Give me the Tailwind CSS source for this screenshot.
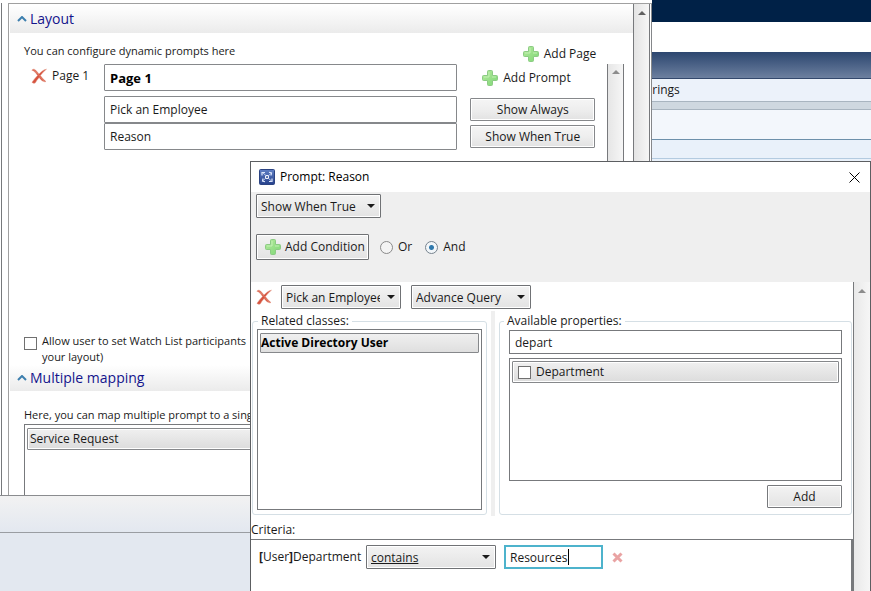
<!DOCTYPE html>
<html lang="en">
<head>
    <meta charset="UTF-8">
    <meta name="viewport" content="width=device-width, initial-scale=1.0">
    <script src="https://cdn.jsdelivr.net/npm/@tailwindcss/browser@4"></script>
    <title>Prompt: Reason</title>
    <style>
        body {
            font-family: 'Open Sans', 'Noto Sans', sans-serif;
        }
    </style>
</head>
<body class="relative flex h-screen overflow-hidden bg-white text-xs text-[#1a1a1a]">
    <!-- Shared icons -->
    <svg class="absolute size-0">
        <defs>
            <linearGradient id="green" x1="0" y1="0" x2="1" y2="1">
                <stop offset="0" stop-color="#b4ea9c"/>
                <stop offset="1" stop-color="#7fd777"/>
            </linearGradient>
            <linearGradient id="blue" x1="0" y1="0" x2="0" y2="1">
                <stop offset="0" stop-color="#5f7fc4"/>
                <stop offset="1" stop-color="#26418c"/>
            </linearGradient>
        </defs>
        <symbol id="plus" viewBox="0 0 16 16">
            <path d="M5.5 1.5a1 1 0 0 1 1-1h3a1 1 0 0 1 1 1v4h4a1 1 0 0 1 1 1v3a1 1 0 0 1-1 1h-4v4a1 1 0 0 1-1 1h-3a1 1 0 0 1-1-1v-4h-4a1 1 0 0 1-1-1v-3a1 1 0 0 1 1-1h4z" fill="url(#green)" stroke="#8ccb84"/>
            <path d="M7 2v5H2M10 7h4" fill="none" stroke="#d3f7c4" opacity=".7"/>
        </symbol>
        <symbol id="cross" viewBox="0 0 16 16">
            <path d="M.8 2.200C1.500.900 3.500.900 4.500 2 5.800 3.300 6.900 4.700 8 6 10 3.800 12.500 1.600 15.500 1.200 13 3.200 11 5.200 9.400 7.600 11 9.800 12.800 11.800 15 13.600c-2.800.8-5-1.400-6.900-4C6.500 11.600 5.200 13.200 4.200 15c-1.200.4-2.700.1-3.200-.8C2.700 11.700 4.600 9.600 6.500 7.500 5 5.200 3.500 3 .8 2.200z" fill="#d6523e" stroke="#e39a88" stroke-width=".5"/>
            <path d="M2.500 2C5.500 3.500 9.500 9.500 13 13" fill="none" stroke="#e58a72" stroke-width=".8"/>
        </symbol>
        <symbol id="arrow" viewBox="0 0 8 4">
            <path d="M0 0h8L4 4z" fill="currentColor"/>
        </symbol>
    </svg>

    <!-- Wizard window -->
    <div class="flex w-3/4 shrink-0 flex-col bg-white">
        <div class="flex h-[496px] border-b border-[#8a8c8f]">
            <div class="w-[2px] shrink-0 border-r border-[#77797c] mt-[3px]"></div>
            <div class="ml-[6px] mt-[3px] flex min-w-0 flex-1 border-t border-l border-[#a0a0a0]">
                <div class="flex min-w-0 flex-1 flex-col pt-px pl-px">
                    <h2 class="flex h-7 shrink-0 items-center gap-[3px] bg-linear-to-b from-white to-[#ebebeb] pl-[7px] text-sm text-[#14148c]">
                        <svg class="h-[6px] w-[10px]" viewBox="0 0 10 6" fill="none" stroke="#3d7fae" stroke-width="2"><path d="M1 5l4-4 4 4"/></svg>
                        Layout
                    </h2>
                    <div class="flex h-[332px] shrink-0 flex-col pt-[9px] pl-[14px]">
                        <div class="flex pr-[37px]">
                            <p class="h-[22px] flex-1 text-[11px] leading-[18px]">You can configure dynamic prompts here</p>
                            <a href="#" class="flex items-center gap-[5px] pt-[2px]"><svg class="size-4"><use href="#plus"/></svg>Add Page</a>
                        </div>
                        <div class="flex h-[263px]">
                            <div class="flex w-20 shrink-0 gap-[5px] pt-[3px] pl-[7px]">
                                <svg class="mt-px size-4"><use href="#cross"/></svg>
                                <span class="leading-[18px]">Page 1</span>
                            </div>
                            <div class="min-w-0 flex-1">
                                <input type="text" aria-label="Page name" value="Page 1" class="block h-[27px] w-full rounded-[1px] border border-[#86888b] px-[5px] text-[13px] font-bold text-black">
                                <input type="text" aria-label="Prompt 1" value="Pick an Employee" class="mt-[5px] block h-[27px] w-full rounded-[1px] border border-[#86888b] px-[5px]">
                                <input type="text" aria-label="Prompt 2" value="Reason" class="block h-[27px] w-full rounded-[1px] border border-[#86888b] px-[5px]">
                            </div>
                            <div class="ml-[13px] flex w-[125px] shrink-0 flex-col">
                                <a href="#" class="flex h-7 items-center gap-[5px] pl-3"><svg class="size-4"><use href="#plus"/></svg>Add Prompt</a>
                                <button class="mt-[6px] h-[23px] rounded-[1px] border border-[#86888b] bg-linear-to-b from-[#f5f5f5] via-[#eeeeee] to-[#e2e2e2] shadow-[inset_0_0_0_1px_white]">Show Always</button>
                                <button class="mt-1 h-[23px] rounded-[1px] border border-[#86888b] bg-linear-to-b from-[#f5f5f5] via-[#eeeeee] to-[#e2e2e2] shadow-[inset_0_0_0_1px_white]">Show When True</button>
                            </div>
                            <div class="mr-[9px] ml-3 flex w-[17px] shrink-0 justify-center border-x border-[#77797c] bg-linear-to-r from-[#e6e6e6] to-[#f6f6f6] pt-[6px] text-[#8c8c8c]">
                                <svg class="h-1 w-2 rotate-180"><use href="#arrow"/></svg>
                            </div>
                        </div>
                        <label class="mt-[6px] flex gap-[5px] text-[11px] leading-4">
                            <input type="checkbox" class="mt-[4px] size-[13px] shrink-0 appearance-none border border-[#707070] bg-white">
                            <span>Allow user to set Watch List participants<br>your layout)</span>
                        </label>
                    </div>
                    <h2 class="flex h-[26px] shrink-0 items-center gap-[3px] bg-linear-to-b from-white to-[#ebebeb] pl-[7px] text-sm text-[#14148c]">
                        <svg class="h-[6px] w-[10px]" viewBox="0 0 10 6" fill="none" stroke="#3d7fae" stroke-width="2"><path d="M1 5l4-4 4 4"/></svg>
                        Multiple mapping
                    </h2>
                    <div class="flex min-h-0 flex-1 flex-col pt-[15px] pl-[14px]">
                        <p class="text-[11px] leading-[18px]">Here, you can map multiple prompt to a single</p>
                        <div class="min-h-0 flex-1 border-t border-l border-[#77797c] pt-[3px] pl-[2px]">
                            <div class="h-[22px] rounded-[1px] border border-[#86888b] bg-linear-to-b from-[#f0f0f0] to-[#dcdcdc] px-[2px] leading-5 shadow-[inset_0_0_0_1px_white]">Service Request</div>
                        </div>
                    </div>
                </div>
                <div class="flex w-[17px] shrink-0 justify-center border-x border-[#77797c] bg-linear-to-r from-[#e4e4e4] to-[#f6f6f6] pt-[7px] text-[#606060]">
                    <svg class="h-1 w-2 rotate-180"><use href="#arrow"/></svg>
                </div>
                <div class="mr-px w-[2px] shrink-0 border-r border-[#85878a]"></div>
            </div>
        </div>
        <div class="h-[37px] border-b border-[#9a9da2] bg-linear-to-b from-[#f2f2f2] to-[#e3e8f0]"></div>
        <div class="flex-1 bg-[#e3e8f0]"></div>
    </div>

    <!-- Console behind the wizard -->
    <div class="-ml-px flex min-w-0 flex-1 flex-col">
        <div class="h-[22px] shrink-0 bg-[#002147]"></div>
        <div class="h-[30px] shrink-0 bg-white"></div>
        <div class="h-[27px] shrink-0 border-b border-[#33486c] bg-linear-to-b from-[#2c466f] to-[#6d809f]"></div>
        <div class="h-[22px] shrink-0 bg-[#ecf2fa] leading-[22px]">rings</div>
        <div class="h-[9px] shrink-0 border-y border-[#a9b5c0] bg-[#cfd8e0]"></div>
        <div class="h-[30px] shrink-0 border-b border-[#6d90ab] bg-[#f3f7fc]"></div>
        <div class="h-[19px] shrink-0 border-b border-[#b3cbe0] bg-[#e9f1fa]"></div>
        <div class="flex-1 bg-[#e9f1fa]"></div>
    </div>

    <!-- Prompt dialog -->
    <div role="dialog" aria-label="Prompt: Reason" class="absolute top-[161px] right-0 bottom-0 left-[250px] flex flex-col border border-b-0 border-[#5c5e61] bg-white">
        <div class="flex h-[30px] shrink-0 items-center pr-[10px] pl-2">
            <svg class="size-4" viewBox="0 0 16 16">
                <rect x=".5" y=".5" width="15" height="15" rx="1" fill="url(#blue)" stroke="#2b4382"/>
                <path d="M3 6.500V3.500h3M10 3.200l2.500.8-.5 2.500M13 9.500v3h-3M6 12.800l-2.500-.8.5-2.500" fill="none" stroke="#dfe8fb" stroke-width="1.200"/>
                <path d="M4 4l3.500 3M12 4.500L9 7M12.500 12L9 9M4 11.500L7 9" stroke="#b7c8ef" stroke-width="1"/>
                <circle cx="8" cy="8" r="1.600" fill="none" stroke="#fff"/>
            </svg>
            <span class="flex-1 pl-[5px] text-black">Prompt: Reason</span>
            <button aria-label="Close"><svg class="size-[11px]" viewBox="0 0 11 11" stroke="#000"><path d="M.5.500l10 10M10.500.500l-10 10"/></svg></button>
        </div>
        <div class="h-[90px] shrink-0 bg-[#efefef] px-[5px] pt-[2px]">
            <div class="relative w-[125px]">
                <select aria-label="Visibility" class="block h-6 w-full appearance-none rounded-[1px] border border-[#707275] bg-linear-to-b from-[#f3f3f3] to-[#e3e3e3] pt-px pr-5 pl-1 shadow-[inset_0_0_0_1px_white]"><option>Show When True</option></select>
                <svg class="pointer-events-none absolute top-[10px] right-[6px] h-1 w-2"><use href="#arrow"/></svg>
            </div>
            <div class="mt-4 flex items-center">
                <button class="mr-[11px] flex h-[26px] w-[113px] items-center gap-[4px] rounded-[1px] border border-[#707275] bg-linear-to-b from-[#f3f3f3] to-[#e3e3e3] pl-2 whitespace-nowrap shadow-[inset_0_0_0_1px_white]"><svg class="size-4 shrink-0"><use href="#plus"/></svg>Add Condition</button>
                <label class="mr-[13px] flex items-center gap-[5px]"><input type="radio" name="join" class="size-[13px] appearance-none rounded-full border border-[#8a8a8a] bg-[#f4f4f4]">Or</label>
                <label class="flex items-center gap-[5px]"><input type="radio" name="join" checked class="size-[13px] appearance-none rounded-full border border-[#77838e] bg-white checked:bg-[radial-gradient(circle,#2f79ad_0_2px,#f2f6f9_3px)]">And</label>
            </div>
        </div>
        <div class="flex min-h-0 flex-1">
            <div class="flex min-w-0 flex-1 flex-col">
                <div class="flex h-[29px] shrink-0 items-center pt-px pl-[5px]">
                    <button aria-label="Delete condition" class="mr-[9px]"><svg class="size-4"><use href="#cross"/></svg></button>
                    <div class="relative mr-[10px] w-[120px]">
                        <select aria-label="Prompt" class="block h-6 w-full appearance-none rounded-[1px] border border-[#707275] bg-linear-to-b from-[#f3f3f3] to-[#e3e3e3] pt-px pr-5 pl-1 shadow-[inset_0_0_0_1px_white]"><option>Pick an Employee</option></select>
                        <svg class="pointer-events-none absolute top-[10px] right-[6px] h-1 w-2"><use href="#arrow"/></svg>
                    </div>
                    <div class="relative w-[120px]">
                        <select aria-label="Query type" class="block h-6 w-full appearance-none rounded-[1px] border border-[#707275] bg-linear-to-b from-[#f3f3f3] to-[#e3e3e3] pt-px pr-5 pl-1 shadow-[inset_0_0_0_1px_white]"><option>Advance Query</option></select>
                        <svg class="pointer-events-none absolute top-[10px] right-[6px] h-1 w-2"><use href="#arrow"/></svg>
                    </div>
                </div>
                <div class="flex h-[205px] shrink-0 pr-px pl-px">
                    <fieldset class="h-[204px] w-[235px] shrink-0 rounded-[3px] border border-[#d5dfe5] px-1">
                        <legend class="ml-px px-[3px] leading-5">Related classes:</legend>
                        <div class="-mt-[2px] h-[181px] border border-[#77797c] px-[2px] pt-[3px]">
                            <div class="h-5 rounded-[1px] border border-[#86888b] bg-linear-to-b from-[#f0f0f0] to-[#dfdfdf] leading-[18px] font-bold text-black">Active Directory User</div>
                        </div>
                    </fieldset>
                    <div class="mx-[4px] w-[4px] shrink-0 bg-[#efefef]"></div>
                    <fieldset class="h-[204px] min-w-0 flex-1 rounded-[3px] border border-[#d5dfe5] px-[9px]">
                        <legend class="-ml-[5px] px-[3px] leading-5">Available properties:</legend>
                        <input type="text" aria-label="Filter properties" value="depart" class="-mt-px block h-6 w-full border border-[#77797c] px-[5px]">
                        <div class="mt-1 h-[123px] border border-[#77797c] p-[2px]">
                            <label class="flex h-[22px] items-center gap-[5px] rounded-[1px] border border-[#86888b] bg-linear-to-b from-[#f0f0f0] to-[#dcdcdc] pl-[5px] shadow-[inset_0_0_0_1px_white]">
                                <input type="checkbox" class="size-[13px] appearance-none border border-[#707070] bg-white">Department
                            </label>
                        </div>
                        <button class="mt-1 ml-auto block h-[23px] w-[75px] rounded-[1px] border border-[#77797c] bg-linear-to-b from-[#f3f3f3] to-[#e3e3e3] shadow-[inset_0_0_0_1px_white]">Add</button>
                    </fieldset>
                </div>
                <p class="h-[23px] shrink-0 pt-1 leading-5">Criteria:</p>
                <div class="flex flex-1 items-start border-t border-r-2 border-[#77797c] pt-[5px] pl-2">
                    <span class="w-[107px] shrink-0 leading-6 whitespace-nowrap"><b>[</b>User<b>]</b>Department</span>
                    <div class="relative mr-2 w-[130px]">
                        <select aria-label="Operator" class="block h-6 w-full appearance-none rounded-[1px] border border-[#707275] bg-linear-to-b from-[#f3f3f3] to-[#e3e3e3] pt-px pr-5 pl-1 underline shadow-[inset_0_0_0_1px_white]"><option>contains</option></select>
                        <svg class="pointer-events-none absolute top-[10px] right-[6px] h-1 w-2"><use href="#arrow"/></svg>
                    </div>
                    <div class="relative">
                        <input type="text" aria-label="Value" value="Resources" class="block h-6 w-[99px] border-2 border-[#4db3cc] px-1">
                        <span class="absolute top-1 left-16 h-4 w-px bg-black"></span>
                    </div>
                    <button aria-label="Remove criterion" class="mt-[7px] ml-[9px]"><svg class="size-[11px]" viewBox="0 0 11 11" stroke="#e9a3a3" stroke-width="3"><path d="M1.500 1.500l8 8M9.500 1.500l-8 8"/></svg></button>
                </div>
            </div>
            <div class="flex w-[17px] shrink-0 justify-center border-l border-[#77797c] bg-linear-to-r from-[#e9e9e9] to-[#f6f6f6] pt-[7px] text-[#8c8c8c]">
                <svg class="h-1 w-2 rotate-180"><use href="#arrow"/></svg>
            </div>
        </div>
    </div>
</body>
</html>
